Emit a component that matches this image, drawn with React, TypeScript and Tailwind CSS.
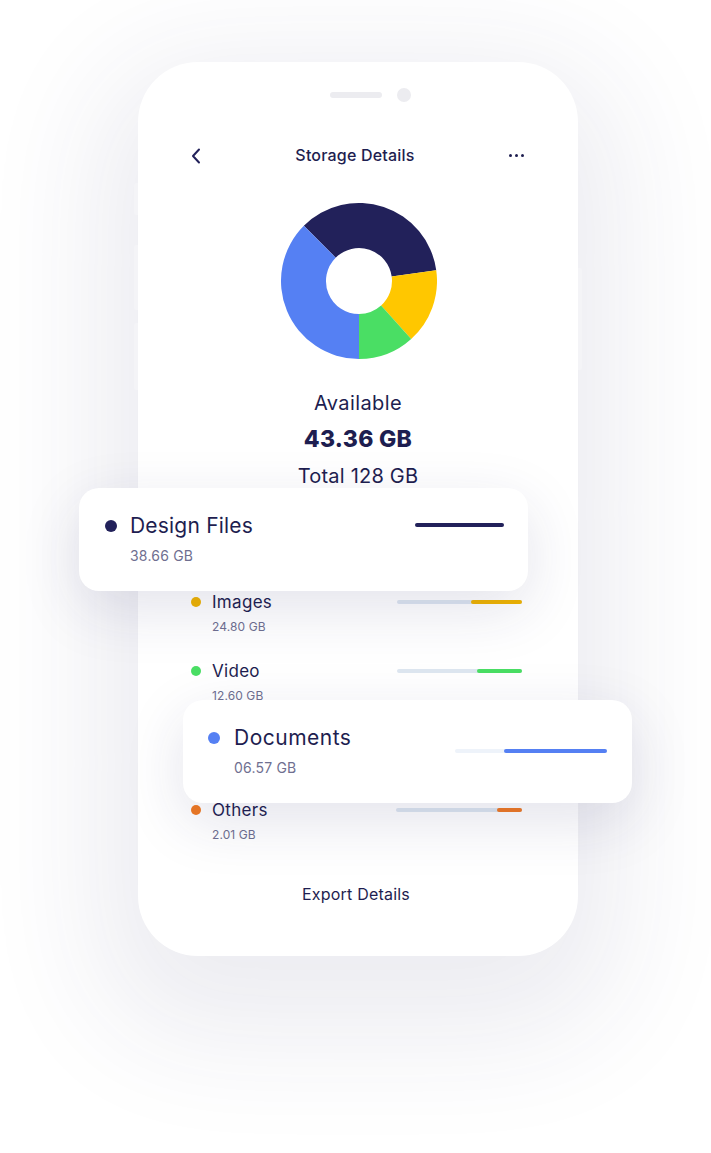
import React from "react";

const NAVY = "#22215a";

function polar(cx: number, cy: number, r: number, deg: number) {
  const a = (deg * Math.PI) / 180;
  return [cx + r * Math.sin(a), cy - r * Math.cos(a)];
}

function seg(a0: number, a1: number) {
  const cx = 78, cy = 78, R = 78, r = 33;
  const [x0, y0] = polar(cx, cy, R, a0);
  const [x1, y1] = polar(cx, cy, R, a1);
  const [x2, y2] = polar(cx, cy, r, a1);
  const [x3, y3] = polar(cx, cy, r, a0);
  const large = a1 - a0 > 180 ? 1 : 0;
  return `M${x0} ${y0} A${R} ${R} 0 ${large} 1 ${x1} ${y1} L${x2} ${y2} A${r} ${r} 0 ${large} 0 ${x3} ${y3} Z`;
}

function Donut() {
  return (
    <svg width="156" height="156" viewBox="0 0 156 156">
      <path d={seg(315, 442)} fill="#22215a" />
      <path d={seg(82, 138)} fill="#ffc700" />
      <path d={seg(138, 180)} fill="#4ade64" />
      <path d={seg(180, 315)} fill="#5580f3" />
    </svg>
  );
}

function Row({
  name,
  size,
  dot,
  fill,
  fillW,
  trackW,
}: {
  name: string;
  size: string;
  dot: string;
  fill: string;
  fillW: number;
  trackW: number;
}) {
  return (
    <div className="flex items-start pl-[53px] pr-[56px]">
      <div className="w-[10px] h-[10px] rounded-full mt-[6px]" style={{ background: dot }} />
      <div className="ml-[11px] flex flex-col">
        <div className="text-[17px] leading-[22px] text-[#1e1e50] tracking-[0.3px]">{name}</div>
        <div className="mt-[6px] text-[12px] leading-[16px] text-[#6f6f90] tracking-[0.1px]">{size}</div>
      </div>
      <div
        className="ml-auto mt-[9px] h-[4px] rounded-full bg-[#dde6f0] flex justify-end"
        style={{ width: trackW }}
      >
        <div className="h-[4px] rounded-full" style={{ width: fillW, background: fill }} />
      </div>
    </div>
  );
}

export default function App() {
  return (
    <div
      className="w-[711px] h-[1153px] bg-white overflow-hidden pt-[62px] pl-[138px]"
      style={{ fontFamily: "Inter, 'Noto Sans', sans-serif" }}
    >
      <div className="relative w-[440px] h-[894px] rounded-[60px] bg-white shadow-[0_40px_120px_40px_rgba(40,40,100,0.09)]">
        {/* side buttons */}
        <div className="absolute left-[-4px] top-[121px] w-[4px] h-[32px] rounded-l-[2px] bg-[#f4f4f7]" />
        <div className="absolute left-[-4px] top-[183px] w-[4px] h-[65px] rounded-l-[2px] bg-[#f4f4f7]" />
        <div className="absolute left-[-4px] top-[261px] w-[4px] h-[67px] rounded-l-[2px] bg-[#f4f4f7]" />
        <div className="absolute right-[-4px] top-[206px] w-[4px] h-[102px] rounded-r-[2px] bg-[#f4f4f7]" />

        <div className="flex flex-col">
          {/* notch */}
          <div className="mt-[26px] flex items-center justify-center h-[14px] pl-[24px] gap-[15px]">
            <div className="w-[52px] h-[6px] rounded-full bg-[#ececf0]" />
            <div className="w-[14px] h-[14px] rounded-full bg-[#ececf0]" />
          </div>

          {/* header */}
          <div className="mt-[41px] h-[24px] flex items-center justify-between pl-[53px] pr-[54px]">
            <svg width="10" height="16" viewBox="0 0 10 16" className="mt-[1px]">
              <path d="M8 1.5 L2 8 L8 14.5" fill="none" stroke={NAVY} strokeWidth="2" strokeLinecap="round" strokeLinejoin="round" />
            </svg>
            <div className="text-[16px] font-medium text-[#1e1e50] tracking-[0.2px]">Storage Details</div>
            <div className="flex gap-[3px] items-center">
              <div className="w-[3px] h-[3px] rounded-full bg-[#1e1e50]" />
              <div className="w-[3px] h-[3px] rounded-full bg-[#1e1e50]" />
              <div className="w-[3px] h-[3px] rounded-full bg-[#1e1e50]" />
            </div>
          </div>

          {/* donut */}
          <div className="mt-[36px] flex justify-center pl-[2px]">
            <Donut />
          </div>

          {/* totals */}
          <div className="mt-[32px] text-center text-[20px] leading-[24px] text-[#1e1e50] tracking-[0.4px]">Available</div>
          <div className="mt-[10px] text-center text-[23px] leading-[28px] font-extrabold text-[#1e1e50] tracking-[0.3px]">43.36 GB</div>
          <div className="mt-[11px] text-center text-[20px] leading-[24px] text-[#1e1e50] tracking-[0.2px]">Total 128 GB</div>

          {/* Design files card */}
          <div className="relative z-10 ml-[-59px] w-[449px] h-[103px] rounded-[20px] bg-white shadow-[0_18px_60px_rgba(40,40,100,0.13)] flex items-start pl-[26px] pr-[24px] pt-[25px]">
            <div className="w-[12px] h-[12px] rounded-full mt-[7px] bg-[#22215a]" />
            <div className="ml-[13px] flex flex-col">
              <div className="text-[21px] leading-[26px] text-[#1e1e50] tracking-[0.2px]">Design Files</div>
              <div className="mt-[8px] text-[14px] leading-[18px] text-[#6f6f90] tracking-[0.2px]">38.66 GB</div>
            </div>
            <div className="ml-auto mt-[10px] w-[89px] h-[4px] rounded-full bg-[#22215a]" />
          </div>

          <Row name="Images" size="24.80 GB" dot="#f0b400" fill="#f0b400" fillW={51} trackW={125} />
          <div className="mt-[25px]">
            <Row name="Video" size="12.60 GB" dot="#4ade64" fill="#4ade64" fillW={45} trackW={125} />
          </div>

          {/* Documents card */}
          <div className="relative z-10 mt-[-4px] ml-[45px] w-[449px] h-[103px] rounded-[20px] bg-white shadow-[0_18px_60px_rgba(40,40,100,0.13)] flex items-start pl-[25px] pr-[25px] pt-[25px]">
            <div className="w-[12px] h-[12px] rounded-full mt-[7px] bg-[#5580f3]" />
            <div className="ml-[14px] flex flex-col">
              <div className="text-[21px] leading-[26px] text-[#1e1e50] tracking-[0.5px]">Documents</div>
              <div className="mt-[8px] text-[14px] leading-[18px] text-[#6f6f90] tracking-[0.2px]">06.57 GB</div>
            </div>
            <div className="ml-auto mt-[24px] w-[152px] h-[4px] rounded-full bg-[#eef3fa] flex justify-end">
              <div className="w-[103px] h-[4px] rounded-full bg-[#5580f3]" />
            </div>
          </div>

          <div className="mt-[-4px]">
            <Row name="Others" size="2.01 GB" dot="#f07a23" fill="#f07a23" fillW={25} trackW={126} />
          </div>

          <div className="mt-[41px] text-center text-[16px] leading-[20px] text-[#1e1e50] pr-[4px] tracking-[0.2px]">Export Details</div>
        </div>
      </div>
    </div>
  );
}
